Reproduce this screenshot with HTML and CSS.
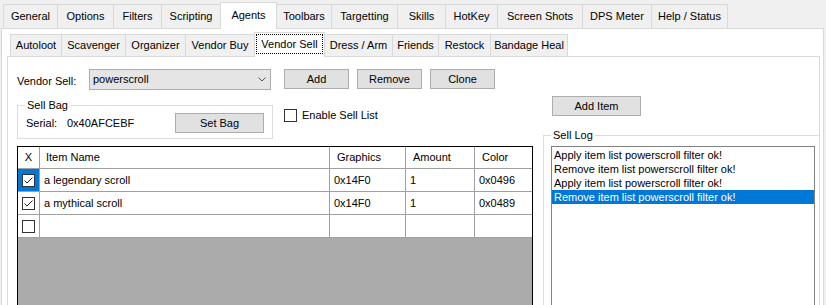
FILE: index.html
```html
<!DOCTYPE html>
<html>
<head>
<meta charset="utf-8">
<title>Agents - Vendor Sell</title>
<link rel="stylesheet" href="styles.css">
</head>
<body>
<div class="app">
  <div class="tabstrip main-tabs">
    <div class="tab">General</div>
    <div class="tab">Options</div>
    <div class="tab">Filters</div>
    <div class="tab">Scripting</div>
    <div class="tab active">Agents</div>
    <div class="tab">Toolbars</div>
    <div class="tab">Targetting</div>
    <div class="tab">Skills</div>
    <div class="tab">HotKey</div>
    <div class="tab">Screen Shots</div>
    <div class="tab">DPS Meter</div>
    <div class="tab">Help / Status</div>
  </div>
  <div class="page outer">
    <div class="tabstrip sub-tabs">
      <div class="tab">Autoloot</div>
      <div class="tab">Scavenger</div>
      <div class="tab">Organizer</div>
      <div class="tab">Vendor Buy</div>
      <div class="tab active"><span class="focus">Vendor Sell</span></div>
      <div class="tab">Dress / Arm</div>
      <div class="tab">Friends</div>
      <div class="tab">Restock</div>
      <div class="tab">Bandage Heal</div>
    </div>
    <div class="page inner">
      <div class="top-row">
        <span class="vs-label">Vendor Sell:</span>
        <div class="combo">
          <span>powerscroll</span>
          <svg class="chev" width="8" height="5" viewBox="0 0 8 5"><polyline points="0.5,0.5 4,4 7.5,0.5" fill="none" stroke="#555" stroke-width="1"/></svg>
        </div>
        <div class="btn btn-sm first">Add</div>
        <div class="btn btn-sm">Remove</div>
        <div class="btn btn-sm">Clone</div>
      </div>
      <div class="body">
        <div class="left">
          <div class="bag-row">
            <fieldset class="group bag">
              <legend>Sell Bag</legend>
              <div class="bag-content">
                <span class="serial-lbl">Serial:</span>
                <span>0x40AFCEBF</span>
                <div class="btn setbag">Set Bag</div>
              </div>
            </fieldset>
            <div class="check-row"><span class="cb"></span><span class="cb-text">Enable Sell List</span></div>
          </div>
          <div class="grid">
            <div class="row head">
              <div class="cell c-x">X</div>
              <div class="cell">Item Name</div>
              <div class="cell">Graphics</div>
              <div class="cell">Amount</div>
              <div class="cell">Color</div>
            </div>
            <div class="row">
              <div class="cell c-x selected"><span class="cb"><svg width="11" height="11" viewBox="0 0 11 11"><polyline points="1.5,5.5 4,8 9.5,2.5" fill="none" stroke="#222" stroke-width="1"/></svg></span></div>
              <div class="cell">a legendary scroll</div>
              <div class="cell">0x14F0</div>
              <div class="cell">1</div>
              <div class="cell">0x0496</div>
            </div>
            <div class="row">
              <div class="cell c-x"><span class="cb"><svg width="11" height="11" viewBox="0 0 11 11"><polyline points="1.5,5.5 4,8 9.5,2.5" fill="none" stroke="#222" stroke-width="1"/></svg></span></div>
              <div class="cell">a mythical scroll</div>
              <div class="cell">0x14F0</div>
              <div class="cell">1</div>
              <div class="cell">0x0489</div>
            </div>
            <div class="row">
              <div class="cell c-x"><span class="cb"></span></div>
              <div class="cell"></div>
              <div class="cell"></div>
              <div class="cell"></div>
              <div class="cell"></div>
            </div>
          </div>
        </div>
        <div class="right">
          <div class="btn additem">Add Item</div>
          <fieldset class="group log">
            <legend>Sell Log</legend>
            <div class="listbox">
              <div class="item">Apply item list powerscroll filter ok!</div>
              <div class="item">Remove item list powerscroll filter ok!</div>
              <div class="item">Apply item list powerscroll filter ok!</div>
              <div class="item sel">Remove item list powerscroll filter ok!</div>
            </div>
          </fieldset>
        </div>
      </div>
    </div>
  </div>
</div>
</body>
</html>
```
FILE: styles.css
```css
* { box-sizing: border-box; }
html, body { margin: 0; height: 305px; overflow: hidden; }
body {
  background: #f0f0f0;
  font: 11px/13px "Liberation Sans", Arial, sans-serif;
  color: #000;
}
.app { width: 826px; height: 305px; overflow: hidden; }

/* tab strips */
.tabstrip { display: flex; align-items: flex-end; }
.tab {
  flex: none;
  border: 1px solid #d9d9d9;
  border-bottom: 0;
  background: #f0f0f0;
  margin-left: -1px;
  display: flex;
  align-items: center;
  justify-content: center;
  white-space: nowrap;
}
.tab:first-child { margin-left: 0; }
.tab.active {
  background: #fff;
  margin-bottom: -1px;
  position: relative;
  z-index: 1;
}

.main-tabs { height: 28px; padding-left: 3px; }
.main-tabs .tab { height: 24px; }
.main-tabs .tab.active { height: 27px; padding-bottom: 2px; }
.main-tabs .tab:nth-child(1) { width: 55px; }
.main-tabs .tab:nth-child(2) { width: 57px; }
.main-tabs .tab:nth-child(3) { width: 49px; }
.main-tabs .tab:nth-child(4) { width: 60px; }
.main-tabs .tab:nth-child(5) { width: 57px; }
.main-tabs .tab:nth-child(6) { width: 56px; }
.main-tabs .tab:nth-child(7) { width: 67px; }
.main-tabs .tab:nth-child(8) { width: 49px; }
.main-tabs .tab:nth-child(9) { width: 53px; }
.main-tabs .tab:nth-child(10) { width: 86px; }
.main-tabs .tab:nth-child(11) { width: 70px; }
.main-tabs .tab:nth-child(12) { width: 77px; }

.sub-tabs { height: 27px; padding-left: 3px; }
.sub-tabs .tab { height: 22px; }
.sub-tabs .tab.active { height: 25px; align-items: stretch; }
.sub-tabs .tab:nth-child(1) { width: 52px; }
.sub-tabs .tab:nth-child(2) { width: 65px; }
.sub-tabs .tab:nth-child(3) { width: 61px; }
.sub-tabs .tab:nth-child(4) { width: 70px; }
.sub-tabs .tab:nth-child(5) { width: 71px; }
.sub-tabs .tab:nth-child(6) { width: 69px; }
.sub-tabs .tab:nth-child(7) { width: 47px; }
.sub-tabs .tab:nth-child(8) { width: 53px; }
.sub-tabs .tab:nth-child(9) { width: 78px; }
.focus {
  flex: 1;
  margin: 1px 1px 3px 1px;
  border: 1px dotted #000;
  display: flex;
  align-items: center;
  justify-content: center;
}

/* pages */
.page { background: #fff; border: 1px solid #d9d9d9; border-bottom: 0; }
.outer {
  margin-left: 1px;
  width: 823px;
  height: 277px;
  padding: 0 3px 0 5px;
}
.inner {
  width: 813px;
  height: 249px;
  overflow: hidden;
  padding: 12px 0 0 9px;
}

/* controls */
.top-row { display: flex; height: 21px; align-items: flex-start; }
.vs-label { width: 72px; margin-top: 6px; }
.combo {
  width: 182px;
  height: 21px;
  border: 1px solid #adadad;
  background: #e5e5e5;
  display: flex;
  align-items: center;
  padding-left: 3px;
}
.chev { margin-left: auto; margin-right: 4px; }
.btn {
  flex: none;
  height: 20px;
  border: 1px solid #adadad;
  background: #e1e1e1;
  display: flex;
  align-items: center;
  justify-content: center;
}
.btn-sm { width: 65px; margin-left: 8px; }
.btn-sm.first { margin-left: 13px; }

.body { display: flex; margin-top: 6px; }
.left { width: 516px; flex: none; }
.right { width: 280px; margin-left: 10px; flex: none; }

.bag-row { display: flex; align-items: flex-start; margin-top: 3px; }
.group {
  margin: 0;
  padding: 0;
  min-width: 0;
  border: 1px solid #dcdcdc;
}
.group legend {
  margin-left: 7px;
  padding: 0 2px;
  line-height: 13px;
}
.bag { width: 256px; flex: none; }
.bag-content {
  display: flex;
  align-items: center;
  height: 20px;
  margin: 1px 0 5px;
  padding-left: 8px;
}
.serial-lbl { width: 41px; }
.setbag { width: 89px; margin-left: auto; margin-right: 8px; }

.check-row {
  display: flex;
  align-items: center;
  margin: 10px 0 0 11px;
  height: 13px;
}
.cb {
  width: 13px;
  height: 13px;
  border: 1px solid #333;
  background: #fff;
  display: flex;
  align-items: center;
  justify-content: center;
  flex: none;
}
.cb-text { margin-left: 5px; }

/* data grid */
.grid {
  margin-top: 7px;
  width: 516px;
  height: 159px;
  border: 1px solid #000;
  border-bottom: 0;
  background: #ababab;
  overflow: hidden;
}
.row {
  display: grid;
  grid-template-columns: 22px 290px 76px 69px 57px;
  height: 23px;
  background: #fff;
  border-bottom: 1px solid #a0a0a0;
}
.row.head { height: 22px; }
.cell {
  border-right: 1px solid #a0a0a0;
  display: flex;
  align-items: center;
  padding-left: 4px;
  white-space: nowrap;
  overflow: hidden;
}
.cell:last-child { border-right: 0; }
.head .cell { padding-left: 7px; }
.head .cell:nth-child(2) { padding-left: 6px; }
.cell.c-x { padding-left: 0; justify-content: center; }
.head .cell.c-x { padding-left: 0; }
.cell.selected { background: #0078d7; }

/* sell log */
.additem { width: 89px; margin-left: 9px; }
.log { width: 280px; margin-top: 13px; border-bottom: 0; }
.listbox {
  margin: 4px 0 0 7px;
  width: 264px;
  height: 159px;
  border: 1px solid #828282;
  border-bottom: 0;
  padding-top: 1px;
}
.item {
  height: 14px;
  line-height: 14px;
  padding-left: 2px;
  white-space: nowrap;
}
.item.sel { background: #0078d7; color: #fff; }
```
